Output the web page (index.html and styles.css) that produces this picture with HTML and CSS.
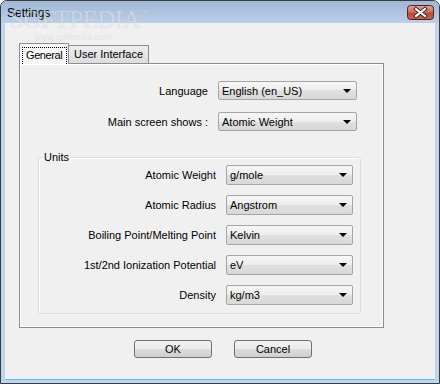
FILE: index.html
```html
<!DOCTYPE html>
<html lang="en">

<head>
    <meta charset="UTF-8">
    <meta name="viewport" content="width=device-width, initial-scale=1.0">
    <title>Settings</title>

    <link rel="stylesheet" href="styles.css">
</head>

<body>
    <div class="Window">
        <div class="Window-title">
            <span class="Window-caption">Settings</span>
            <div class="Window-close">
                <svg width="27" height="15" viewBox="0 0 27 15">
                    <defs>
                        <linearGradient id="closeFill" x1="0" y1="0" x2="0" y2="1">
                            <stop offset="0" stop-color="#e3a394" />
                            <stop offset="0.45" stop-color="#d07162" />
                            <stop offset="0.55" stop-color="#bf4a38" />
                            <stop offset="1" stop-color="#c9604c" />
                        </linearGradient>
                    </defs>
                    <rect x="0.5" y="0.5" width="26" height="14" rx="3" fill="url(#closeFill)" stroke="#4e2226" />
                    <path d="M9 4 L18 11 M18 4 L9 11" stroke="#3b2c2e" stroke-width="4" stroke-linecap="square" />
                    <path d="M9 4 L18 11 M18 4 L9 11" stroke="#ffffff" stroke-width="2" stroke-linecap="square" />
                </svg>
            </div>
        </div>

        <div class="Window-client">
            <div class="Tabs">
                <div class="Tabs-bar">
                    <div class="Tab is-selected"><span class="Tab-focus">General</span></div>
                    <div class="Tab">User Interface</div>
                </div>

                <div class="Tabs-panel">
                    <div class="Form Form--main">
                        <span class="Form-label">Language</span>
                        <div class="Combo">English (en_US)</div>

                        <span class="Form-label">Main screen shows :</span>
                        <div class="Combo">Atomic Weight</div>
                    </div>

                    <div class="Group">
                        <span class="Group-title">Units</span>
                        <div class="Form Form--units">
                            <span class="Form-label">Atomic Weight</span>
                            <div class="Combo">g/mole</div>

                            <span class="Form-label">Atomic Radius</span>
                            <div class="Combo">Angstrom</div>

                            <span class="Form-label">Boiling Point/Melting Point</span>
                            <div class="Combo">Kelvin</div>

                            <span class="Form-label">1st/2nd Ionization Potential</span>
                            <div class="Combo">eV</div>

                            <span class="Form-label">Density</span>
                            <div class="Combo">kg/m3</div>
                        </div>
                    </div>
                </div>
            </div>

            <div class="Buttons">
                <div class="Button">OK</div>
                <div class="Button">Cancel</div>
            </div>
        </div>

        <!-- softpedia watermark from the screenshot -->
        <div class="Watermark">
            <span class="Watermark-logo">SOFTPEDIA<sup>™</sup></span>
            <span class="Watermark-url">www.softpedia.com</span>
        </div>
    </div>
</body>

</html>
```

FILE: styles.css
```css
html,
body {
    margin: 0;
    background: #ffffff;
}

body {
    font: 11px "Liberation Sans", Arial, sans-serif;
    color: #000000;
}

.Window {
    position: relative;
    box-sizing: border-box;
    width: 440px;
    height: 384px;
    display: flex;
    flex-direction: column;
    padding: 0 4px 4px 4px;
    border: 1px solid #3a3a3a;
    border-radius: 7px 7px 0 0;
    background: #bfd4ed;
    overflow: hidden;
}

.Window-title {
    height: 22px;
    margin: 0 -4px;
    padding: 0 5px 0 6px;
    display: flex;
    align-items: center;
    justify-content: space-between;
    background: linear-gradient(#a0b7d4, #bad0ea);
}

.Window-caption {
    font-size: 12px;
    padding-top: 1px;
}

.Window-close {
    display: flex;
    padding-top: 1px;
}

.Window-client {
    flex: 1;
    background: #f0f0f0;
    padding: 20px 0 0 14px;
    box-shadow: 0 1px 0 #4fc4ef;
}

/* tabs */

.Tabs {
    width: 365px;
}

.Tabs-bar {
    display: flex;
    align-items: flex-end;
    height: 20px;
}

.Tab {
    box-sizing: border-box;
    width: 81px;
    height: 18px;
    margin-left: -1px;
    border: 1px solid #898c95;
    border-bottom: none;
    background: linear-gradient(#eeeeee, #dcdcdc);
    text-align: center;
    line-height: 16px;
    white-space: nowrap;
}

.Tab.is-selected {
    position: relative;
    z-index: 1;
    width: 50px;
    height: 21px;
    margin: 0 0 -1px 0;
    padding: 3px 1px 0 2px;
    background: #f8f8f8;
    text-align: left;
}

.Tab-focus {
    display: block;
    box-sizing: border-box;
    height: 17px;
    padding-left: 3px;
    border: 1px dotted #000000;
    border-bottom: none;
    line-height: 15px;
    letter-spacing: -0.4px;
}

.Tabs-panel {
    box-sizing: border-box;
    height: 265px;
    border: 1px solid #898c95;
    box-shadow: inset 1px 1px 0 #ffffff, inset -1px -1px 0 #ffffff;
    padding: 17px 0 0 0;
}

/* forms */

.Form {
    display: grid;
    align-items: center;
}

.Form--main {
    grid-template-columns: 188px 139px;
    column-gap: 10px;
    row-gap: 12px;
}

.Form--units {
    grid-template-columns: 177px 127px;
    column-gap: 10px;
    row-gap: 10px;
    padding: 1px 0 8px 0;
}

.Form-label {
    text-align: right;
}

.Combo {
    box-sizing: border-box;
    height: 19px;
    display: flex;
    align-items: center;
    justify-content: space-between;
    padding: 0 5px 0 3px;
    border: 1px solid #a5a5a5;
    border-radius: 2px;
    background: linear-gradient(#f6f6f6, #ededed 50%, #e0e0e0 50%, #d8d8d8);
}

.Form--units .Combo {
    height: 20px;
}

.Combo::after {
    content: "";
    border-top: 4px solid #000000;
    border-left: 4px solid transparent;
    border-right: 4px solid transparent;
}

/* group box */

.Group {
    box-sizing: border-box;
    width: 323px;
    margin: 26px 0 0 18px;
    border: 1px solid #d5dfe5;
    border-radius: 3px;
    box-shadow: inset 1px 1px 0 #ffffff;
}

.Group-title {
    display: table;
    margin: -7px 0 0 4px;
    padding: 0 1px;
    line-height: 13px;
    background: #f0f0f0;
}

/* buttons */

.Buttons {
    display: flex;
    justify-content: center;
    gap: 22px;
    margin-top: 12px;
    padding-right: 8px;
}

.Button {
    box-sizing: border-box;
    width: 78px;
    height: 18px;
    line-height: 16px;
    text-align: center;
    border: 1px solid #707070;
    border-radius: 3px;
    background: linear-gradient(#f2f2f2, #ebebeb 50%, #dddddd 50%, #cfcfcf);
}

/* watermark */

.Watermark {
    position: absolute;
    top: 5px;
    left: 9px;
    pointer-events: none;
}

.Watermark-logo {
    display: block;
    font: 25px "Liberation Serif", serif;
    letter-spacing: -0.5px;
    color: rgba(255, 255, 255, 0.45);
    text-shadow: 0 0 1px rgba(120, 120, 120, 0.25);
}

.Watermark-logo sup {
    font-size: 9px;
    vertical-align: 12px;
}

.Watermark-url {
    display: block;
    margin: -2px 0 0 24px;
    font-size: 9px;
    color: rgba(200, 200, 200, 0.35);
}
```
